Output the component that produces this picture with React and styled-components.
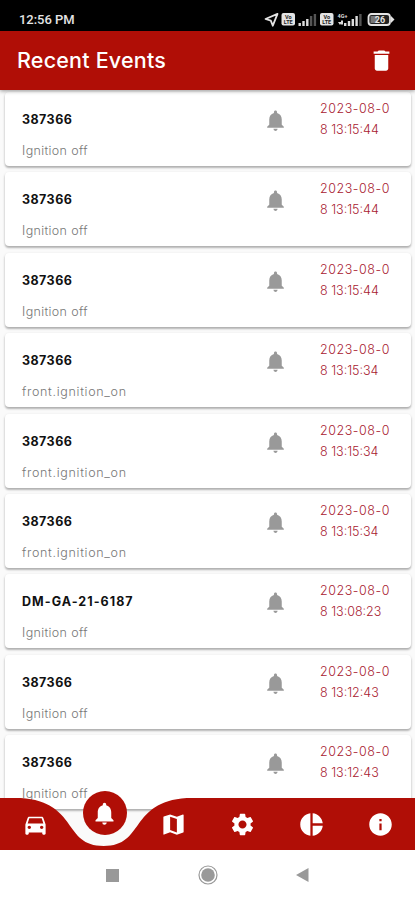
import styled, { createGlobalStyle } from 'styled-components';
import {
  MdDelete,
  MdDirectionsCar,
  MdInfo,
  MdMap,
  MdNotifications,
  MdPieChart,
  MdSettings,
} from 'react-icons/md';

const GlobalStyle = createGlobalStyle`
  :root {
    --brand-color: #b00e06;
    --icon-color: #999;
  }

  * {
    box-sizing: border-box;
  }

  body {
    margin: 0;
    background-color: #fff;
    font-family: Inter, 'Open Sans', sans-serif;
  }
`;

const Screen = styled.div`
  display: flex;
  flex-direction: column;
  width: 415px;
  height: 900px;
  overflow: hidden;
`;

const StatusBar = styled.div`
  flex: none;
  display: flex;
  align-items: center;
  justify-content: space-between;
  height: 31px;
  padding: 9px 19px 0;
  background-color: #000;
  color: #e4e4e4;
`;

const Clock = styled.span`
  font: 500 13px/20px Roboto, sans-serif;
  letter-spacing: -0.05px;
`;

const StatusIcons = styled.svg`
  display: block;
  width: 132px;
  height: 16px;
`;

const Header = styled.header`
  flex: none;
  display: flex;
  align-items: center;
  justify-content: space-between;
  height: 59px;
  padding: 0 20px 0 17px;
  background-color: var(--brand-color);
  color: #fff;
  position: relative;
  z-index: 1;
  box-shadow: 0 1px 4px rgba(0, 0, 0, 0.4);

  svg {
    display: block;
  }
`;

const Title = styled.h1`
  margin: 0;
  padding-bottom: 2px;
  font-size: 21.5px;
  font-weight: 500;
  letter-spacing: 0.2px;
`;

const Content = styled.main`
  flex: none;
  position: relative;
  height: 760px;
  overflow: hidden;
  background-color: #fafafa;
`;

const EventList = styled.div`
  display: flex;
  flex-direction: column;
  gap: 6.4px;
  padding: 2px 4px 0 5px;
`;

const Card = styled.article`
  flex: none;
  display: grid;
  grid-template-columns: 239px 59px 1fr;
  height: 74px;
  padding-left: 17px;
  border-radius: 4px;
  background-color: #fff;
  box-shadow: 0 2px 2px rgba(0, 0, 0, 0.22), 0 1px 3px rgba(0, 0, 0, 0.14);
`;

const Device = styled.div`
  padding-top: 18px;
  font-size: 12.5px;
  font-weight: 700;
  line-height: 20px;
  letter-spacing: ${(props) => (props.$plate ? '1.05px' : '0.45px')};
  color: #111;
`;

const Message = styled.div`
  padding-top: 11px;
  font-size: 12.5px;
  font-weight: 300;
  line-height: 20px;
  letter-spacing: ${(props) => (props.$wide ? '0.68px' : '0.35px')};
  color: #777;
`;

const Bell = styled.div`
  padding: 16px 0 0 2px;
  color: var(--icon-color);
`;

const Time = styled.time`
  padding-top: 6px;
  font-size: 12.5px;
  font-weight: 300;
  line-height: 21px;
  letter-spacing: 0;
  color: #a82030;
  white-space: nowrap;

  span {
    display: block;
  }

  span:first-child {
    letter-spacing: 0.55px;
  }
`;

const NavBar = styled.nav`
  position: absolute;
  left: 0;
  right: 0;
  bottom: 0;
  height: 52px;
`;

const NavShape = styled.svg`
  position: absolute;
  inset: 0;
  display: block;
`;

const NavItems = styled.div`
  position: relative;
  display: grid;
  grid-template-columns: repeat(6, 1fr);
  place-items: center;
  height: 100%;
  padding-left: 1px;
  color: #fff;
`;

const NavItem = styled.div`
  display: flex;
  align-items: center;
  justify-content: center;
  width: 44px;
  height: 44px;
  border-radius: 50%;
  background-color: ${(props) => (props.$active ? 'var(--brand-color)' : 'transparent')};
  transform: ${(props) => (props.$active ? 'translateY(-11px)' : 'none')};
`;

const SystemBar = styled.div`
  flex: none;
  display: flex;
  align-items: center;
  justify-content: space-between;
  height: 50px;
  padding: 0 106px;
  background-color: #fff;
  color: var(--icon-color);

  svg {
    display: block;
  }
`;

const events = [
  { device: '387366', message: 'Ignition off', time: '8 13:15:44' },
  { device: '387366', message: 'Ignition off', time: '8 13:15:44' },
  { device: '387366', message: 'Ignition off', time: '8 13:15:44' },
  { device: '387366', message: 'front.ignition_on', time: '8 13:15:34' },
  { device: '387366', message: 'front.ignition_on', time: '8 13:15:34' },
  { device: '387366', message: 'front.ignition_on', time: '8 13:15:34' },
  { device: 'DM-GA-21-6187', message: 'Ignition off', time: '8 13:08:23' },
  { device: '387366', message: 'Ignition off', time: '8 13:12:43' },
  { device: '387366', message: 'Ignition off', time: '8 13:12:43' },
];

const navIcons = [MdDirectionsCar, MdNotifications, MdMap, MdSettings, MdPieChart, MdInfo];

function SignalBars({ x, dim }) {
  return (
    <g transform={`translate(${x} 0)`}>
      {[3, 5, 7, 10, 12].map((h, i) => (
        <rect
          key={h}
          x={i * 3.8}
          y={14 - h}
          width="2.4"
          height={h}
          fill={i >= dim ? '#555' : '#ddd'}
        />
      ))}
    </g>
  );
}

function VolteBadge({ x }) {
  return (
    <g transform={`translate(${x} 1)`} fontFamily="Roboto, sans-serif" fontWeight="700">
      <rect width="13.5" height="12.5" rx="2" fill="#e4e4e4" />
      <text x="6.75" y="6" fontSize="5.5" textAnchor="middle" fill="#222">Vo</text>
      <text x="6.75" y="11.3" fontSize="5.5" textAnchor="middle" fill="#222">LTE</text>
    </g>
  );
}

function StatusGlyphs() {
  return (
    <StatusIcons viewBox="0 0 132 16">
      <path
        d="M13.5 1.8 1.5 7l5.3 1.7 2 5z"
        fill="none"
        stroke="#e4e4e4"
        strokeWidth="1.8"
        strokeLinejoin="round"
      />
      <VolteBadge x={17.5} />
      <SignalBars x={34.5} dim={3} />
      <VolteBadge x={56} />
      <g fill="#ddd" fontFamily="Roboto, sans-serif" fontWeight="700">
        <text x="73.5" y="5.5" fontSize="5.5">4G+</text>
        <path d="M74 10h4l-2 3zM77 8.5h2v4h-2z" />
      </g>
      <SignalBars x={80} dim={4} />
      <rect x="104.5" y="2" width="21.5" height="11" rx="3" fill="#222" stroke="#e4e4e4" strokeWidth="1.8" />
      <path d="M127 4 130.5 7.5 127 11z" fill="#e4e4e4" />
      <rect x="106.5" y="4" width="7" height="7" fill="#777" />
      <text x="116" y="11" fontFamily="Roboto, sans-serif" fontSize="9" fontWeight="700" textAnchor="middle" fill="#e4e4e4">26</text>
    </StatusIcons>
  );
}

function EventCard({ event }) {
  return (
    <Card>
      <div>
        <Device $plate={event.device.length > 6}>{event.device}</Device>
        <Message $wide={event.message.length > 12}>{event.message}</Message>
      </div>
      <Bell>
        <MdNotifications size={25} />
      </Bell>
      <Time>
        <span>2023-08-0</span>
        <span>{event.time}</span>
      </Time>
    </Card>
  );
}

export default function App() {
  return (
    <Screen>
      <GlobalStyle />
      <StatusBar>
        <Clock>12:56 PM</Clock>
        <StatusGlyphs />
      </StatusBar>
      <Header>
        <Title>Recent Events</Title>
        <MdDelete size={27} />
      </Header>
      <Content>
        <EventList>
          {events.map((event, i) => (
            <EventCard key={i} event={event} />
          ))}
        </EventList>
        <NavBar>
          <NavShape width="415" height="52" viewBox="0 0 415 52">
            <path
              d="M0 0H20.75C78.85 4 62.25 48 103.75 48C145.25 48 128.65 4 186.75 0H415V52H0Z"
              fill="#b00e06"
            />
          </NavShape>
          <NavItems>
            {navIcons.map((Icon, i) => (
              <NavItem key={i} $active={i === 1}>
                <Icon size={27} />
              </NavItem>
            ))}
          </NavItems>
        </NavBar>
      </Content>
      <SystemBar>
        <svg width="13" height="13">
          <rect width="13" height="13" fill="currentColor" />
        </svg>
        <svg width="20" height="20" viewBox="0 0 20 20">
          <circle cx="10" cy="10" r="9" fill="none" stroke="currentColor" strokeWidth="1.2" />
          <circle cx="10" cy="10" r="6.8" fill="currentColor" />
        </svg>
        <svg width="13" height="14">
          <path d="M0 7 12.5 0V14Z" fill="currentColor" />
        </svg>
      </SystemBar>
    </Screen>
  );
}
